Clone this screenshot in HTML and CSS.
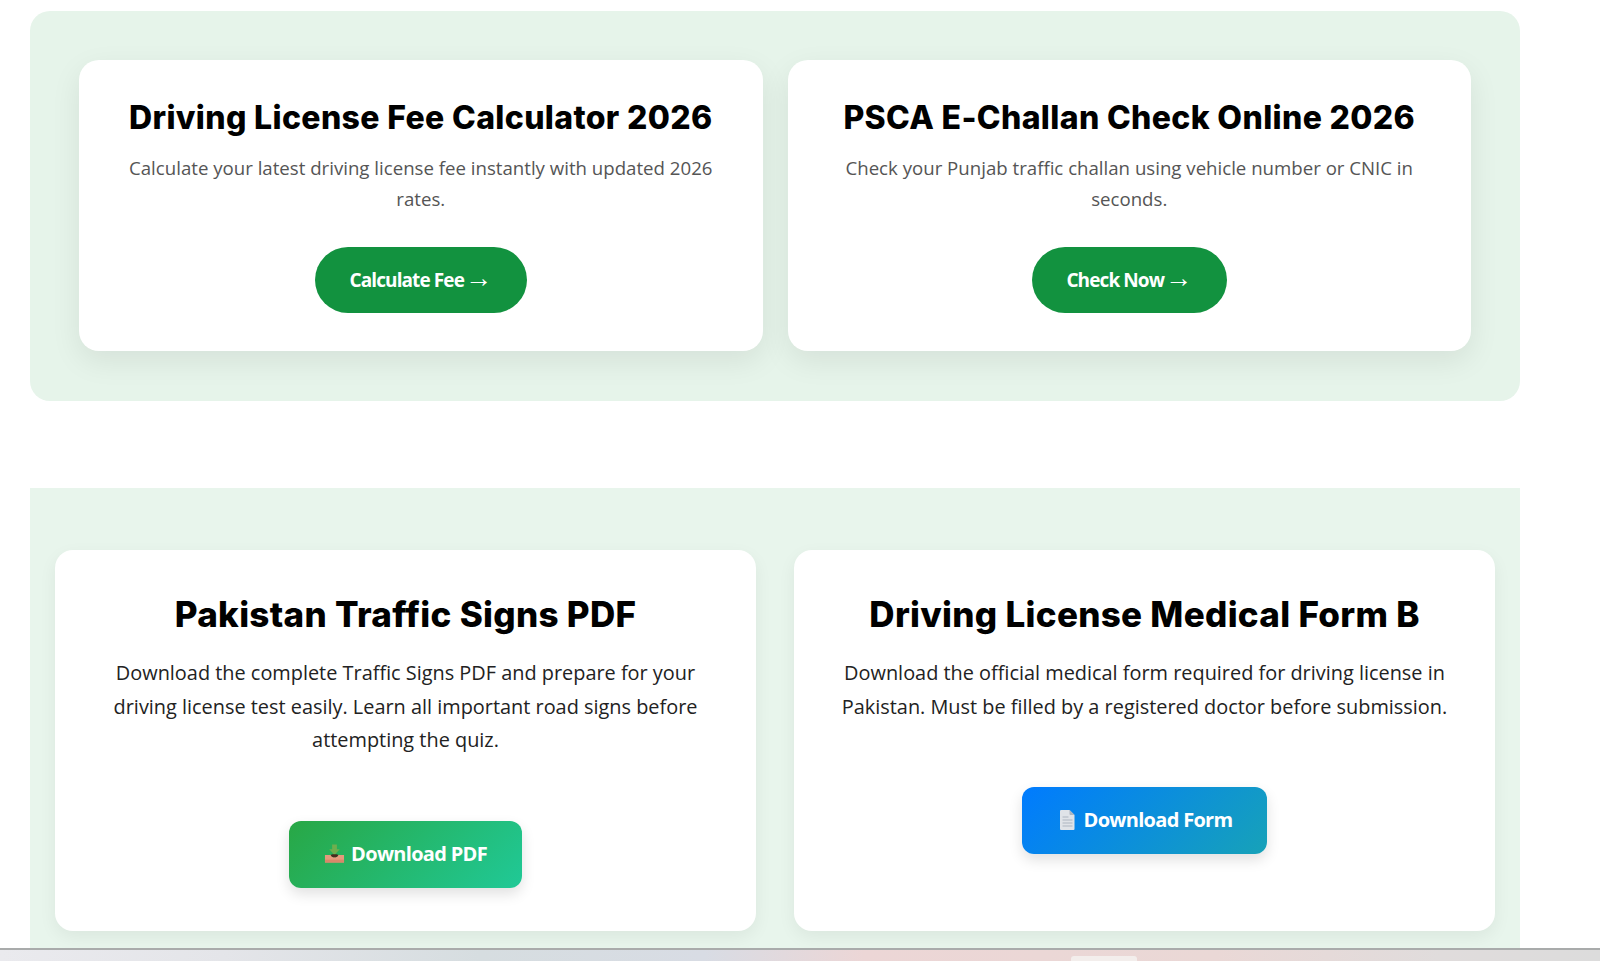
FILE: index.html
```html
<!DOCTYPE html>
<html lang="en">
<head>
    <meta charset="UTF-8">
    <meta name="viewport" content="width=device-width, initial-scale=1.0">
    <title>Driving License Tools</title>
    <link rel="stylesheet" href="styles.css">
</head>
<body>
    <div class="page">
        <div class="content">
            <section class="tools-panel">
                <div class="tool-card">
                    <h2>Driving License Fee Calculator 2026</h2>
                    <p>Calculate your latest driving license fee instantly with updated 2026 rates.</p>
                    <a href="#" class="pill-btn pill-fee">Calculate Fee<span class="arrow">→</span></a>
                </div>
                <div class="tool-card">
                    <h2>PSCA E-Challan Check Online 2026</h2>
                    <p>Check your Punjab traffic challan using vehicle number or CNIC in seconds.</p>
                    <a href="#" class="pill-btn pill-check">Check Now<span class="arrow">→</span></a>
                </div>
            </section>

            <section class="downloads-panel">
                <div class="download-card">
                    <h2>Pakistan Traffic Signs PDF</h2>
                    <p>Download the complete Traffic Signs PDF and prepare for your driving license test easily. Learn all important road signs before attempting the quiz.</p>
                    <a href="#" class="download-btn btn-pdf">
                        <svg class="btn-icon" viewBox="0 0 22 22" aria-hidden="true">
                            <path d="M8.5 2h5v5h3l-5.5 6-5.5-6h3z" fill="#6fae4e"/>
                            <path d="M1 13h6c.6 1.5 2 2.4 4 2.4s3.400-.9 4-2.400h6v8H1z" fill="#e59a7c"/>
                            <path d="M7 13c.6 1.500 2 2.400 4 2.400s3.400-.9 4-2.400l-1.500-.6h-5z" fill="#4a2a1e"/>
                            <path d="M1 18h20v3H1z" fill="#d9876a"/>
                        </svg>
                        Download PDF
                    </a>
                </div>
                <div class="download-card">
                    <h2>Driving License Medical Form B</h2>
                    <p>Download the official medical form required for driving license in Pakistan. Must be filled by a registered doctor before submission.</p>
                    <a href="#" class="download-btn btn-form">
                        <svg class="btn-icon" viewBox="0 0 20 22" aria-hidden="true">
                            <path d="M3.500 1H12l5 5v14a1 1 0 0 1-1 1H3.500a1 1 0 0 1-1-1V2a1 1 0 0 1 1-1z" fill="#dfe3e8"/>
                            <path d="M12 1l5 5h-4a1 1 0 0 1-1-1z" fill="#aeb6c0"/>
                            <path d="M5 8h6M5 11h10M5 14h10M5 17h10" stroke="#aeb6c0" stroke-width="1.200"/>
                        </svg>
                        Download Form
                    </a>
                </div>
            </section>
        </div>
        <div class="taskbar">
            <span class="taskbar-tab"></span>
        </div>
    </div>
</body>
</html>
```

FILE: styles.css
```css
* {
    box-sizing: border-box;
}

body {
    margin: 0;
    background-color: #ffffff;
    font-family: "Open Sans", Arial, sans-serif;
    overflow: hidden;
}

.page {
    display: flex;
    flex-direction: column;
    height: 961px;
}

.content {
    flex: 1;
    min-height: 0;
    overflow: hidden;
    padding: 11px 0 0 30px;
}

h2 {
    margin: 0;
    font-family: Inter, Arial, sans-serif;
    font-weight: 800;
    color: #000000;
}

p {
    margin: 0;
}

/* top block */
.tools-panel {
    display: grid;
    grid-template-columns: 1fr 1fr;
    gap: 25px;
    width: 1490px;
    height: 390px;
    padding: 49px 49px;
    background-color: #e6f4ea;
    border-radius: 20px;
}

.tool-card {
    height: 291px;
    padding: 39px 40px;
    background-color: #ffffff;
    border-radius: 20px;
    text-align: center;
    box-shadow: 0 10px 30px rgba(0, 0, 0, 0.08);
}

.tool-card h2 {
    font-size: 32px;
    line-height: 38px;
    letter-spacing: 0.35px;
}

.tool-card p {
    margin-top: 15px;
    font-size: 18.650px;
    line-height: 31px;
    color: #555555;
}

.pill-btn {
    display: inline-block;
    height: 66px;
    margin-top: 33px;
    border-radius: 33px;
    background-color: #12923f;
    color: #ffffff;
    font-size: 19px;
    font-weight: 700;
    line-height: 66px;
    letter-spacing: -0.9px;
    text-decoration: none;
}

.arrow {
    margin-left: 1px;
    font-family: "Liberation Sans", Arial, sans-serif;
    font-size: 27px;
    font-weight: 400;
    line-height: 0;
    letter-spacing: 0;
}

.pill-fee {
    width: 212px;
}

.pill-check {
    width: 195px;
}

/* bottom block */
.downloads-panel {
    display: grid;
    grid-template-columns: 1fr 1fr;
    gap: 38px;
    width: 1490px;
    margin-top: 87px;
    padding: 62px 25px 40px;
    background-color: #e8f5ec;
}

.download-card {
    height: 381px;
    padding: 41px 40px;
    background-color: #ffffff;
    border-radius: 18px;
    text-align: center;
    box-shadow: 0 6px 18px rgba(0, 0, 0, 0.06);
}

.download-card h2 {
    font-size: 35px;
    line-height: 46px;
    letter-spacing: 0.3px;
}

.download-card p {
    margin-top: 19px;
    font-size: 19.900px;
    line-height: 33.500px;
    color: #222222;
}

.download-btn {
    display: inline-flex;
    align-items: center;
    justify-content: center;
    gap: 6px;
    height: 67px;
    margin-top: 64px;
    padding-bottom: 2px;
    border-radius: 12px;
    color: #ffffff;
    font-size: 20px;
    font-weight: 700;
    letter-spacing: -0.7px;
    text-decoration: none;
    box-shadow: 0 6px 14px rgba(0, 0, 0, 0.12);
}

.btn-pdf {
    width: 233px;
    background: linear-gradient(135deg, #28a745, #20c997);
}

.btn-form {
    width: 245px;
    background: linear-gradient(135deg, #007bff, #17a2b8);
}

.btn-icon {
    width: 21px;
    height: 22px;
}

/* blurred desktop strip at the bottom */
.taskbar {
    display: flex;
    align-items: flex-end;
    flex: none;
    height: 13px;
    padding-left: 1071px;
    border-top: 2px solid #a9abab;
    background: linear-gradient(90deg, #eaeaee 0%, #e4e5e9 14%, #d6dde0 30%, #d8dce4 44%, #ecd6d6 54%, #ead8d6 76%, #e0dcdc 90%, #dcdcdc 100%);
}

.taskbar-tab {
    width: 66px;
    height: 5px;
    background-color: #f3eeec;
    border-radius: 3px 3px 0 0;
}
```
